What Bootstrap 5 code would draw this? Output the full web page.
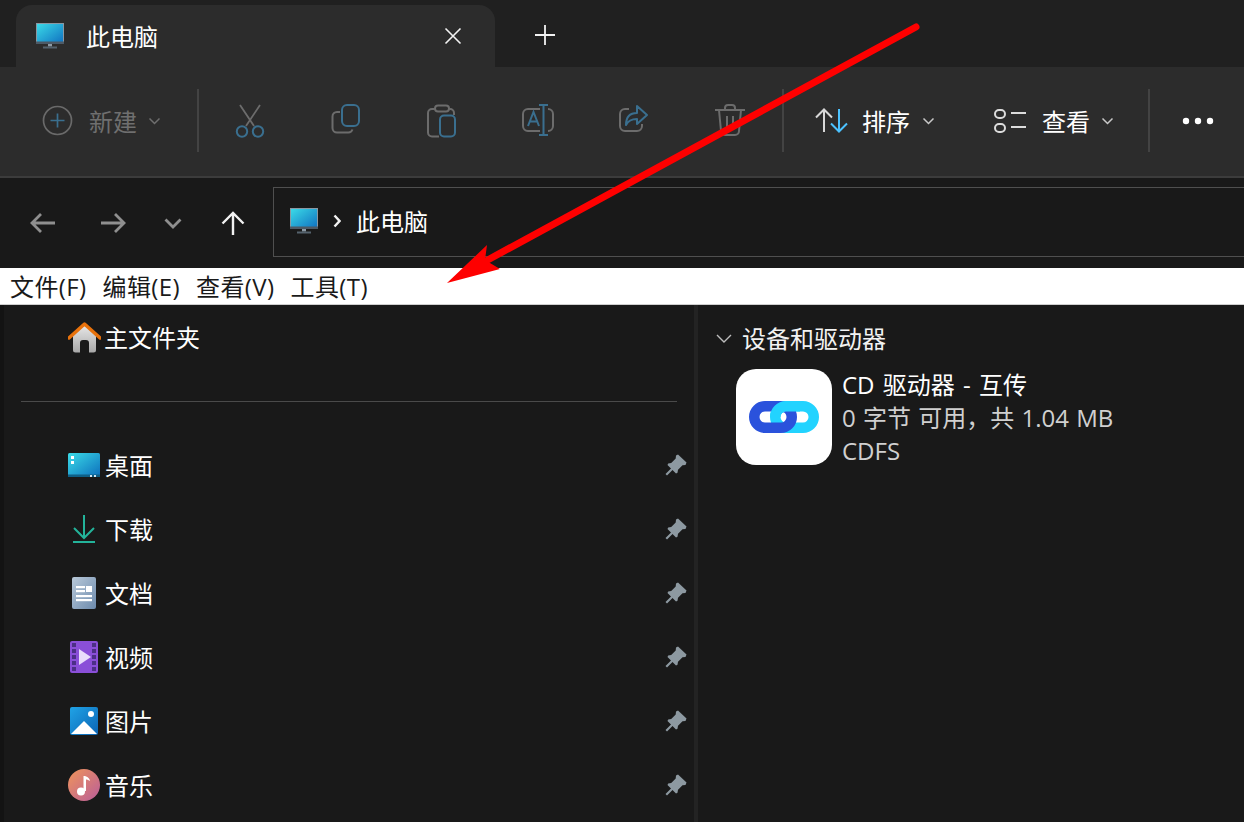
<!DOCTYPE html>
<html lang="zh-CN">
<head>
  <meta charset="UTF-8">
  <title>此电脑</title>
  <meta name="viewport" content="width=device-width, initial-scale=1">
  <link href="https://cdn.jsdelivr.net/npm/bootstrap@5.3.2/dist/css/bootstrap.min.css" rel="stylesheet">
  <style>
    html, body { height: 100%; overflow: hidden; }
    body {
      background-color: #191919;
      color: #fff;
      font-family: "Open Sans", "Noto Sans CJK SC", sans-serif;
      font-size: 24px;
      line-height: 32px;
    }
    .shell { width: 1244px; height: 822px; position: relative; overflow: hidden; }
    svg { display: block; flex: none; }

    .tab-strip { height: 67px; background-color: #202020; padding: 5px 0 0 16px; }
    .file-tab {
      width: 479px; height: 62px; background-color: #2c2c2c;
      border-radius: 16px 16px 0 0; padding: 0 33px 0 20px;
    }
    .file-tab .tab-title { margin-left: 22px; margin-top: 1px; }
    .new-tab { margin-left: 40px; margin-top: -3px; }

    .tool-bar { height: 111px; background-color: #2c2c2c; border-bottom: 2px solid #3c3c3c; padding-left: 42px; padding-bottom: 2px; }
    .tool-sep { width: 2px; height: 63px; background-color: #434343; flex: none; }
    .tool-cell { width: 96px; flex: none; justify-content: center; }
    .dim-text { color: #6f6f6f; }
    .tool-new { width: 155px; flex: none; }
    .tool-label { margin-left: 16px; margin-top: 2px; }
    .tool-caret { margin-left: 11px; }
    .edit-tools { margin-left: 3px; margin-right: 4px; }
    .sort-icon { margin-left: 31px; }
    .sort-label { margin-left: 14px; margin-top: 2px; }
    .sort-caret { margin-left: 12px; }
    .view-icon { margin-left: 59px; }
    .more-sep { margin-left: 34px; }
    .more-dots { margin-left: 32px; }

    .addr-row { height: 90px; background-color: #191919; }
    .addr-nav { width: 273px; flex: none; padding-left: 30px; }
    .nav-forward { margin-left: 44px; }
    .nav-recent { margin-left: 38px; }
    .nav-up { margin-left: 39px; }
    .addr-box {
      height: 70px; flex: 1 1 auto; margin-right: -4px; margin-bottom: 2px;
      border: 1px solid #4f4f4f; padding-left: 16px; padding-bottom: 2px;
    }
    .addr-caret { margin-left: 15px; }
    .addr-name { margin-left: 15px; margin-top: 2px; }

    .menu-row {
      height: 37px; background-color: #fff; color: #1a1a1a;
      border-bottom: 1px solid #cfcfcf; padding: 2px 0 0 10px; gap: 16px;
      letter-spacing: .4px;
    }
    .main-area { height: 517px; background-color: #191919; }
    .side-pane { width: 698px; flex: none; border-left: 4px solid #131313; border-right: 4px solid #232323; }
    .side-home { height: 64px; padding-left: 64px; padding-top: 1px; }
    .side-rule { height: 1px; background-color: #4a4a4a; margin: 32px 17px 31px 17px; }
    .side-item { height: 64px; padding: 0 8px 0 64px; }
    .side-name { margin-left: 3px; }
    .side-item .side-name { margin-left: 4px; margin-top: 2px; }
    .pin-slot { margin-left: auto; margin-right: -1px; }

    .drive-pane { padding: 0 0 0 18px; }
    .group-head { height: 66px; padding-top: 1px; color: #f2f2f2; }
    .group-head .group-name { margin-left: 10px; }
    .drive-tile { width: 96px; height: 96px; background-color: #fff; border-radius: 20px; flex: none; margin-left: 20px; margin-top: -2px; }
    .drive-info { margin-left: 10px; margin-top: -3px; line-height: 33px; }
    .drive-title { word-spacing: 2px; }
    .drive-sub { color: #d0d0d0; word-spacing: 1px; }

    .red-arrow { position: absolute; left: 0; top: 0; pointer-events: none; }
  </style>
</head>
<body>
<div class="shell">

  <div class="tab-strip d-flex">
    <div class="file-tab d-flex align-items-center">
      <svg width="28" height="26" viewBox="0 0 28 26">
        <defs><linearGradient id="scr" x1="0" y1="0" x2="1" y2="1"><stop offset="0" stop-color="#3bdce8"/><stop offset="1" stop-color="#0f6fc0"/></linearGradient></defs>
        <rect x="0.5" y="0.5" width="27" height="20" fill="url(#scr)" stroke="#8a98a3"/>
        <rect x="0" y="18.5" width="28" height="2.5" fill="#4d5a66"/>
        <rect x="12" y="21" width="4" height="2.5" fill="#8d9aa5"/>
        <rect x="7" y="23.5" width="14" height="2" fill="#55626d"/>
      </svg>
      <span class="tab-title">此电脑</span>
      <svg class="ms-auto" width="18" height="18" viewBox="0 0 18 18"><path d="M1.5 1.5l15 15M16.5 1.5l-15 15" stroke="#f2f2f2" stroke-width="1.6" fill="none"/></svg>
    </div>
    <div class="new-tab d-flex align-items-center">
      <svg width="20" height="20" viewBox="0 0 20 20"><path d="M10 0v20M0 10h20" stroke="#f2f2f2" stroke-width="1.8" fill="none"/></svg>
    </div>
  </div>

  <div class="tool-bar d-flex align-items-center">
    <div class="tool-new d-flex align-items-center dim-text">
      <svg width="31" height="31" viewBox="0 0 31 31"><circle cx="15.5" cy="15.5" r="14" fill="none" stroke="#6a6a6a" stroke-width="1.7"/><path d="M15.5 8.5v14M8.5 15.5h14" stroke="#3a6f8f" stroke-width="1.7" fill="none"/></svg>
      <span class="tool-label">新建</span>
      <svg class="tool-caret" width="13" height="8" viewBox="0 0 13 8" fill="none"><path d="M1.5 1.5l5 5 5-5" stroke="#6f6f6f" stroke-width="1.5"/></svg>
    </div>
    <div class="tool-sep"></div>
    <div class="d-flex edit-tools">
      <div class="tool-cell d-flex">
        <svg width="30" height="34" viewBox="0 0 30 34" fill="none">
          <path d="M5 1l14 21M25 1L11 22" stroke="#6c6c6c" stroke-width="1.8"/>
          <circle cx="7" cy="27.5" r="5.2" stroke="#3a6f8f" stroke-width="2"/>
          <circle cx="23" cy="27.5" r="5.2" stroke="#3a6f8f" stroke-width="2"/>
        </svg>
      </div>
      <div class="tool-cell d-flex">
        <svg width="30" height="30" viewBox="0 0 30 30" fill="none">
          <path d="M9 8H6a4.5 4.5 0 0 0-4.5 4.500V24A4.500 4.500 0 0 0 6 28.500h11a4.500 4.500 0 0 0 4.500-3" stroke="#6c6c6c" stroke-width="2"/>
          <rect x="11" y="1" width="17" height="21" rx="5" stroke="#3a6f8f" stroke-width="2"/>
        </svg>
      </div>
      <div class="tool-cell d-flex">
        <svg width="30" height="34" viewBox="0 0 30 34" fill="none">
          <path d="M9 5H5a4 4 0 0 0-4 4v19.500a4 4 0 0 0 4 4h7M22 5h1a4 4 0 0 1 4 4v2" stroke="#6c6c6c" stroke-width="2"/>
          <rect x="8" y="1.500" width="14" height="6" rx="3" stroke="#6c6c6c" stroke-width="2"/>
          <rect x="13" y="11.500" width="15" height="21" rx="4" stroke="#3a6f8f" stroke-width="2"/>
        </svg>
      </div>
      <div class="tool-cell d-flex">
        <svg width="32" height="32" viewBox="0 0 32 32" fill="none">
          <path d="M18 5H6a5 5 0 0 0-5 5v12a5 5 0 0 0 5 5h12M26 5a5 5 0 0 1 5 5v12a5 5 0 0 1-5 5" stroke="#6c6c6c" stroke-width="2"/>
          <path d="M17 1h9M21.500 1v30M17 31h9" stroke="#3a6f8f" stroke-width="2"/>
          <path d="M6 22l5.500-14L17 22M8 17.500h7" stroke="#3a6f8f" stroke-width="2"/>
        </svg>
      </div>
      <div class="tool-cell d-flex">
        <svg width="30" height="28" viewBox="0 0 30 28" fill="none">
          <path d="M10 5H6a5 5 0 0 0-5 5v12a5 5 0 0 0 5 5h12a5 5 0 0 0 5-5v-2" stroke="#6c6c6c" stroke-width="2"/>
          <path d="M18 2l10 9-10 9v-5c-6 0-9 2-11 6 0-8 4-12 11-12z" stroke="#3a6f8f" stroke-width="2" stroke-linejoin="round"/>
        </svg>
      </div>
      <div class="tool-cell d-flex">
        <svg width="30" height="32" viewBox="0 0 30 32" fill="none">
          <path d="M0 6h30M10 6V4a3 3 0 0 1 3-3h4a3 3 0 0 1 3 3v2M4 6l2 21a4 4 0 0 0 4 4h10a4 4 0 0 0 4-4l2-21" stroke="#6c6c6c" stroke-width="2"/>
          <path d="M12 12v13M18 12v13" stroke="#6c6c6c" stroke-width="2"/>
        </svg>
      </div>
    </div>
    <div class="tool-sep"></div>
    <svg class="sort-icon" width="33" height="25" viewBox="0 0 33 25" fill="none">
      <path d="M9 24V1.500M1 9.500l8-8 8 8" stroke="#d8d8d8" stroke-width="2"/>
      <path d="M24 1v22.500M16 15.500l8 8 8-8" stroke="#4cc2ff" stroke-width="2"/>
    </svg>
    <span class="sort-label">排序</span>
    <svg class="sort-caret" width="13" height="8" viewBox="0 0 13 8" fill="none"><path d="M1.500 1.500l5 5 5-5" stroke="#c8c8c8" stroke-width="1.500"/></svg>
    <svg class="view-icon" width="32" height="24" viewBox="0 0 32 24" fill="none">
      <rect x="1" y="1" width="10" height="8" rx="4" stroke="#dcdcdc" stroke-width="2"/>
      <rect x="1" y="15" width="10" height="8" rx="4" stroke="#dcdcdc" stroke-width="2"/>
      <path d="M17 4h15M17 18h15" stroke="#dcdcdc" stroke-width="2"/>
    </svg>
    <span class="tool-label">查看</span>
    <svg class="tool-caret" width="13" height="8" viewBox="0 0 13 8" fill="none"><path d="M1.500 1.500l5 5 5-5" stroke="#c8c8c8" stroke-width="1.500"/></svg>
    <div class="tool-sep more-sep"></div>
    <svg class="more-dots" width="32" height="8" viewBox="0 0 32 8"><circle cx="4" cy="4" r="3.200" fill="#fff"/><circle cx="16" cy="4" r="3.200" fill="#fff"/><circle cx="28" cy="4" r="3.200" fill="#fff"/></svg>
  </div>

  <div class="addr-row d-flex align-items-center">
    <div class="addr-nav d-flex align-items-center">
      <svg width="26" height="22" viewBox="0 0 26 22" fill="none"><path d="M25 11H2M11 2l-9 9 9 9" stroke="#8f8f8f" stroke-width="2.800"/></svg>
      <svg class="nav-forward" width="26" height="22" viewBox="0 0 26 22" fill="none"><path d="M1 11h23M15 2l9 9-9 9" stroke="#8f8f8f" stroke-width="2.800"/></svg>
      <svg class="nav-recent" width="18" height="11" viewBox="0 0 18 11" fill="none"><path d="M1.500 1.500L9 9l7.500-7.500" stroke="#8f8f8f" stroke-width="2.800"/></svg>
      <svg class="nav-up" width="24" height="24" viewBox="0 0 24 24" fill="none"><path d="M12 24V2M1.500 12.500L12 2l10.500 10.500" stroke="#f2f2f2" stroke-width="2.400"/></svg>
    </div>
    <div class="addr-box d-flex align-items-center">
      <svg width="28" height="26" viewBox="0 0 28 26">
        <rect x="0.5" y="0.5" width="27" height="20" fill="url(#scr)" stroke="#8a98a3"/>
        <rect x="0" y="18.500" width="28" height="2.500" fill="#4d5a66"/>
        <rect x="12" y="21" width="4" height="2.500" fill="#8d9aa5"/>
        <rect x="7" y="23.500" width="14" height="2" fill="#55626d"/>
      </svg>
      <svg class="addr-caret" width="8" height="14" viewBox="0 0 8 14" fill="none"><path d="M1.500 1.500L6.500 7l-5 5.500" stroke="#f2f2f2" stroke-width="2.400"/></svg>
      <span class="addr-name">此电脑</span>
    </div>
  </div>

  <div class="menu-row d-flex align-items-center">
    <span>文件(F)</span><span>编辑(E)</span><span>查看(V)</span><span>工具(T)</span>
  </div>

  <div class="main-area d-flex">
    <div class="side-pane">
      <div class="side-home d-flex align-items-center">
        <svg width="33" height="31" viewBox="0 0 33 31">
          <defs><linearGradient id="hm" x1="0" y1="0" x2="0" y2="1"><stop offset="0" stop-color="#e8e8e8"/><stop offset="1" stop-color="#a8a8a8"/></linearGradient></defs>
          <path d="M5 13L16.500 3 28 13v15a2.500 2.500 0 0 1-2.500 2.500H21V21a3 3 0 0 0-3-3h-3a3 3 0 0 0-3 3v9.500H7.500A2.500 2.500 0 0 1 5 28z" fill="url(#hm)"/>
          <path d="M1 16L16.500 2 32 16" fill="none" stroke="#e8720c" stroke-width="3.400" stroke-linejoin="round" stroke-linecap="round"/>
        </svg>
        <span class="side-name">主文件夹</span>
      </div>
      <div class="side-rule"></div>

      <div class="side-item d-flex align-items-center">
        <svg width="33" height="24" viewBox="0 0 33 24">
          <defs><linearGradient id="dk" x1="0" y1="0" x2="1" y2="1"><stop offset="0" stop-color="#3bdce8"/><stop offset="1" stop-color="#0c6ebc"/></linearGradient></defs>
          <rect width="32" height="24" rx="1.500" fill="url(#dk)"/>
          <rect y="21.500" width="32" height="2.500" fill="#0e5f86"/>
          <rect x="3" y="3" width="3" height="3" fill="#fff"/><rect x="3" y="8" width="3" height="3" fill="#fff"/>
          <rect x="22" y="22" width="2" height="2" fill="#cfe6f2"/><rect x="26" y="22" width="2" height="2" fill="#cfe6f2"/>
        </svg>
        <span class="side-name">桌面</span>
        <svg class="pin-slot" width="22" height="22" viewBox="0 0 22 22"><path d="M13 0.500l8.500 8-1 2.500-3 .3-4.500 4.500-.5 3-1.500 .7-3.500-3.500-5.500 5.500-1.500-1.500 5.500-5.500-3.500-3.500.7-1.500 3-.5 4.500-4.500.3-3z" fill="#8d99a1"/></svg>
      </div>
      <div class="side-item d-flex align-items-center">
        <svg width="33" height="28" viewBox="0 0 33 28" fill="none">
          <path d="M16 0v22M6 13l10 10 10-10" stroke="#23b39a" stroke-width="2"/>
          <path d="M5 27h22" stroke="#23b39a" stroke-width="2"/>
        </svg>
        <span class="side-name">下载</span>
        <svg class="pin-slot" width="22" height="22" viewBox="0 0 22 22"><path d="M13 0.500l8.500 8-1 2.500-3 .3-4.500 4.500-.5 3-1.500 .7-3.500-3.500-5.500 5.500-1.500-1.500 5.500-5.500-3.500-3.500.7-1.500 3-.5 4.500-4.500.3-3z" fill="#8d99a1"/></svg>
      </div>
      <div class="side-item d-flex align-items-center">
        <svg width="33" height="32" viewBox="0 0 33 32">
          <defs><linearGradient id="dc" x1="0" y1="0" x2="1" y2="1"><stop offset="0" stop-color="#b9c9d9"/><stop offset="1" stop-color="#6d8bad"/></linearGradient></defs>
          <rect x="4" width="24" height="32" rx="2" fill="url(#dc)"/>
          <rect x="8" y="9" width="9" height="2.200" fill="#fff"/><rect x="8" y="13" width="9" height="2.200" fill="#fff"/>
          <rect x="18" y="9" width="6" height="6" fill="#fff"/>
          <rect x="8" y="18" width="16" height="2.200" fill="#fff"/><rect x="8" y="22" width="16" height="2.200" fill="#fff"/>
        </svg>
        <span class="side-name">文档</span>
        <svg class="pin-slot" width="22" height="22" viewBox="0 0 22 22"><path d="M13 0.500l8.500 8-1 2.500-3 .3-4.500 4.500-.5 3-1.500 .7-3.500-3.500-5.500 5.500-1.500-1.500 5.500-5.500-3.500-3.500.7-1.500 3-.5 4.500-4.500.3-3z" fill="#8d99a1"/></svg>
      </div>
      <div class="side-item d-flex align-items-center">
        <svg width="33" height="32" viewBox="0 0 33 32">
          <rect x="2" width="28" height="32" rx="2" fill="#8a4fd8"/>
          <g fill="#4c2f86">
            <rect x="4" y="2" width="4" height="4"/><rect x="4" y="8" width="4" height="4"/><rect x="4" y="14" width="4" height="4"/><rect x="4" y="20" width="4" height="4"/><rect x="4" y="26" width="4" height="4"/>
            <rect x="24" y="2" width="4" height="4"/><rect x="24" y="8" width="4" height="4"/><rect x="24" y="14" width="4" height="4"/><rect x="24" y="20" width="4" height="4"/><rect x="24" y="26" width="4" height="4"/>
          </g>
          <path d="M11 8l12 8-12 8z" fill="#e9dcfb"/>
        </svg>
        <span class="side-name">视频</span>
        <svg class="pin-slot" width="22" height="22" viewBox="0 0 22 22"><path d="M13 0.500l8.500 8-1 2.500-3 .3-4.500 4.500-.5 3-1.500 .7-3.500-3.500-5.500 5.500-1.500-1.500 5.500-5.500-3.500-3.500.7-1.500 3-.5 4.500-4.500.3-3z" fill="#8d99a1"/></svg>
      </div>
      <div class="side-item d-flex align-items-center">
        <svg width="33" height="28" viewBox="0 0 33 28">
          <defs><linearGradient id="pc" x1="0" y1="0" x2="1" y2="1"><stop offset="0" stop-color="#20a3e6"/><stop offset="1" stop-color="#0b64b4"/></linearGradient></defs>
          <rect x="2" width="28" height="28" rx="2" fill="url(#pc)"/>
          <circle cx="23" cy="7" r="3" fill="#fff"/>
          <path d="M3 27L16 14l13 13z" fill="#fff"/>
        </svg>
        <span class="side-name">图片</span>
        <svg class="pin-slot" width="22" height="22" viewBox="0 0 22 22"><path d="M13 0.500l8.500 8-1 2.500-3 .3-4.500 4.500-.5 3-1.500 .7-3.500-3.500-5.500 5.500-1.500-1.500 5.500-5.500-3.500-3.500.7-1.500 3-.5 4.500-4.500.3-3z" fill="#8d99a1"/></svg>
      </div>
      <div class="side-item d-flex align-items-center">
        <svg width="33" height="32" viewBox="0 0 33 32">
          <defs><linearGradient id="ms" x1="0" y1="0" x2="1" y2="1"><stop offset="0" stop-color="#f0955a"/><stop offset="1" stop-color="#b95d9a"/></linearGradient></defs>
          <circle cx="16" cy="16" r="16" fill="url(#ms)"/>
          <circle cx="13" cy="22.500" r="4" fill="#fff"/>
          <path d="M15.500 22V7c3 0 6 1.500 6.500 5-2-1.500-3.500-1.500-4-1.500V22z" fill="#fff"/>
        </svg>
        <span class="side-name">音乐</span>
        <svg class="pin-slot" width="22" height="22" viewBox="0 0 22 22"><path d="M13 0.500l8.500 8-1 2.500-3 .3-4.500 4.500-.5 3-1.500 .7-3.500-3.500-5.500 5.500-1.500-1.500 5.500-5.500-3.500-3.500.7-1.500 3-.5 4.500-4.500.3-3z" fill="#8d99a1"/></svg>
      </div>
    </div>

    <div class="drive-pane flex-grow-1">
      <div class="group-head d-flex align-items-center">
        <svg width="16" height="9" viewBox="0 0 16 9" fill="none"><path d="M1 1l7 7 7-7" stroke="#bdbdbd" stroke-width="1.400"/></svg>
        <span class="group-name">设备和驱动器</span>
      </div>
      <div class="d-flex">
        <div class="drive-tile d-flex align-items-center justify-content-center">
          <svg width="72" height="34" viewBox="0 0 72 34" fill="none">
            <rect x="27.250" y="6.250" width="38.500" height="21.500" rx="10.750" stroke="#22d3ff" stroke-width="10.500"/>
            <rect x="6.250" y="6.250" width="37.500" height="21.500" rx="10.750" stroke="#2a52dc" stroke-width="10.500"/>
            <path d="M52 6.250H38A10.750 10.750 0 0 0 27.250 17" stroke="#22d3ff" stroke-width="10.500"/>
          </svg>
        </div>
        <div class="drive-info">
          <div class="drive-title">CD 驱动器 - 互传</div>
          <div class="drive-sub">0 字节 可用，共 1.04 MB</div>
          <div class="drive-sub">CDFS</div>
        </div>
      </div>
    </div>
  </div>

  <svg class="red-arrow" width="1244" height="822" viewBox="0 0 1244 822">
    <path d="M916 27L484 262" stroke="#fe0000" stroke-width="7" stroke-linecap="round" fill="none"/>
    <path d="M447 283L487 245 485 260 500 269z" fill="#fe0000"/>
  </svg>
</div>
</body>
</html>
